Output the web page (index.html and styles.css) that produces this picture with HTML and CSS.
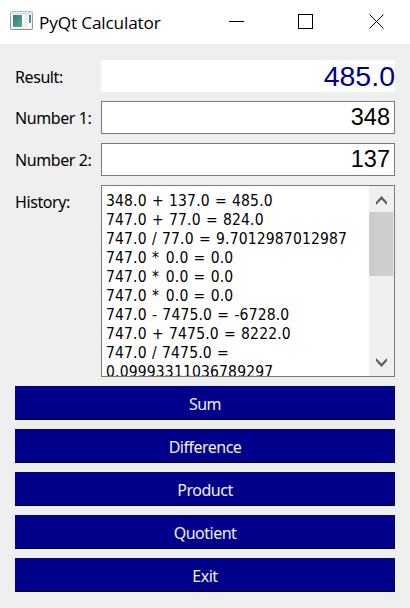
FILE: index.html
```html
<!DOCTYPE html>
<html lang="en">
<head>
<meta charset="utf-8">
<title>PyQt Calculator</title>
<link rel="stylesheet" href="styles.css">
</head>
<body>
<header class="titlebar">
  <svg class="app-icon" width="24" height="20" viewBox="0 0 24 20">
    <defs>
      <linearGradient id="pane" x1="0" y1="0" x2="1" y2="1"><stop offset="0" stop-color="#39749b"/><stop offset="1" stop-color="#55ad74"/></linearGradient>
      <linearGradient id="frame" x1="0" y1="0" x2="0" y2="1"><stop offset="0" stop-color="#b1b9c1"/><stop offset="1" stop-color="#858b92"/></linearGradient>
    </defs>
    <rect x=".5" y=".5" width="22" height="18" rx="1" fill="#eef1f4" stroke="url(#frame)"/>
    <path d="M1.5 2.5h20" stroke="#d2dce6"/>
    <rect x="2" y="4" width="19" height="13" fill="#fff"/>
    <rect x="3" y="4" width="9" height="12" fill="url(#pane)"/>
    <rect x="14" y="4" width="4" height="12" fill="#eceff0"/>
    <rect x="19" y="4" width="2" height="8" fill="url(#pane)"/>
  </svg>
  <h1 class="title">PyQt Calculator</h1>
  <svg class="controls" width="154" height="16" viewBox="0 0 154 16" fill="none" stroke="#000" shape-rendering="crispEdges">
    <path d="M0 7.500h15M69.500 .5h14v14h-14z"/>
    <path d="M140.500 .5l14 14M154.500 .5l-14 14" shape-rendering="auto"/>
  </svg>
</header>
<main class="window">
  <div class="form">
    <span class="label">Result:</span>
    <output class="field result">485.0</output>
    <span class="label">Number 1:</span>
    <div class="field entry">348</div>
    <span class="label">Number 2:</span>
    <div class="field entry">137</div>
    <span class="label label-top">History:</span>
    <div class="history">
      <div class="lines">348.0 + 137.0 = 485.0<br>747.0 + 77.0 = 824.0<br>747.0 / 77.0 = 9.7012987012987<br>747.0 <span class="star">*</span> 0.0 = 0.0<br>747.0 <span class="star">*</span> 0.0 = 0.0<br>747.0 <span class="star">*</span> 0.0 = 0.0<br>747.0 - 7475.0 = -6728.0<br>747.0 + 7475.0 = 8222.0<br>747.0 / 7475.0 =<br>0.09993311036789297</div>
      <div class="scrollbar">
        <svg class="arrow" width="25" height="26" viewBox="0 0 25 26"><path d="M7 16v3l5.500-5.500 5.500 5.500v-3l-5.500-6z" fill="#606060"/></svg>
        <div class="thumb"></div>
        <svg class="arrow" width="25" height="26" viewBox="0 0 25 26"><path d="M7 11v-3l5.500 5.500 5.500-5.500v3l-5.500 6z" fill="#606060"/></svg>
      </div>
    </div>
  </div>
  <div class="buttons">
    <button class="button">Sum</button>
    <button class="button">Difference</button>
    <button class="button">Product</button>
    <button class="button">Quotient</button>
    <button class="button">Exit</button>
  </div>
</main>
</body>
</html>
```

FILE: styles.css
```css
* { box-sizing: border-box; }
body {
  margin: 0;
  width: 410px;
  height: 608px;
  overflow: hidden;
  background: #efefef;
  color: #000;
  font: 16px/19px "Noto Sans", sans-serif;
}
.titlebar {
  display: flex;
  align-items: flex-start;
  height: 44px;
  padding: 11px 0 0 10px;
  background: #fff;
}
.title {
  margin: 0 0 0 5px;
  width: 151px;
  font: 17.2px/24px "Open Sans", sans-serif;
  letter-spacing: -.14px;
  white-space: nowrap;
}
.controls { margin: 3px 0 0 39px; overflow: visible; }
.window { padding: 16px 15px 0; }
.form {
  display: grid;
  grid-template-columns: 86px 294px;
  grid-template-rows: 32px 33px 33px 192px;
  row-gap: 9px;
}
.label {
  align-self: center;
  padding-top: 2px;
  letter-spacing: -.42px;
  white-space: nowrap;
}
.label-top { align-self: start; padding-top: 8px; }
.field {
  background: #fff;
  text-align: right;
  font-family: "Liberation Sans", Arial, sans-serif;
}
.result { color: #00008b; font-size: 28.500px; line-height: 33px; }
.entry {
  padding-right: 4px;
  border: 1px solid #7a7a7a;
  font-size: 23.500px;
  line-height: 30px;
}
.history {
  display: flex;
  border: 1px solid #7a7a7a;
  background: #fff;
  overflow: hidden;
}
.lines {
  flex: 1;
  padding: 6px 0 0 4px;
  font: 15.5px/19px "DejaVu Sans Condensed", "DejaVu Sans", sans-serif;
  font-stretch: condensed;
  letter-spacing: .17px;
  word-spacing: .6px;
  white-space: nowrap;
}
.star { letter-spacing: 1.6px; }
.scrollbar {
  display: flex;
  flex-direction: column;
  width: 25px;
  background: #f0f0f0;
}
.arrow { display: block; }
.thumb { width: 24px; height: 64px; margin-bottom: 74px; background: #cdcdcd; }
.buttons {
  display: flex;
  flex-direction: column;
  gap: 9px;
  margin-top: 9px;
}
.button {
  height: 34px;
  padding: 2px 0 0;
  border: 0;
  background: #00008b;
  box-shadow: inset -1px -1px #000028;
  color: #f0f0f0;
  font: 16px/19px "Noto Sans", sans-serif;
  letter-spacing: -.5px;
}
```
